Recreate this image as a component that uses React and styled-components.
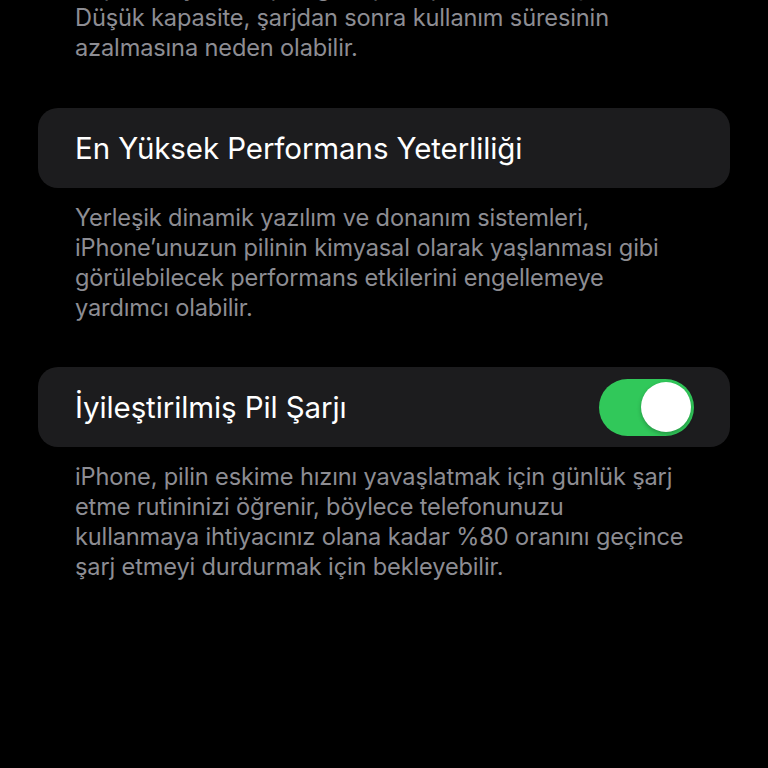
import React, { useState } from "react";
import styled, { createGlobalStyle } from "styled-components";

const Global = createGlobalStyle`
  html, body { margin: 0; padding: 0; background: #000; }
  body { font-family: "Inter", "Roboto", "Noto Sans", sans-serif; -webkit-font-smoothing: antialiased; }
`;

const Page = styled.div`
  width: 768px;
  height: 768px;
  overflow: hidden;
  background: #000;
  padding: 0 38px;
  box-sizing: border-box;
`;

const Footer = styled.p`
  margin: ${(p) => p.$top || 0}px 0 0 0;
  padding: 0 0 0 37px;
  color: #8d8d93;
  font-size: 23.6px;
  line-height: 30px;
  letter-spacing: -0.15px;
  white-space: nowrap;
`;

const Card = styled.div`
  margin-top: ${(p) => p.$top || 0}px;
  height: 80px;
  background: #1c1c1e;
  border-radius: 20px;
  display: flex;
  align-items: center;
  justify-content: space-between;
  padding: 0 37px;
  box-sizing: border-box;
`;

const Title = styled.span`
  color: #fff;
  font-size: 29.5px;
  letter-spacing: -0.1px;
`;

const Track = styled.button`
  width: 95px;
  height: 57px;
  border-radius: 29px;
  border: none;
  padding: 3.5px;
  margin-right: -1px;
  background: ${(p) => (p.$on ? "#31c85a" : "#39393d")};
  display: flex;
  justify-content: ${(p) => (p.$on ? "flex-end" : "flex-start")};
  align-items: center;
  box-sizing: border-box;
  cursor: pointer;
`;

const Knob = styled.span`
  width: 50px;
  height: 50px;
  border-radius: 50%;
  background: #fff;
  box-shadow: 0 2px 4px rgba(0, 0, 0, 0.25);
`;

export default function App() {
  const [on, setOn] = useState(true);
  return (
    <>
      <Global />
      <Page>
        <Footer $top={-27}>
          Kapasite, yeni bir pile göre pil kapasitesinin ölçüsüdür.
          <br />
          Düşük kapasite, şarjdan sonra kullanım süresinin
          <br />
          azalmasına neden olabilir.
        </Footer>
        <Card $top={45}>
          <Title>En Yüksek Performans Yeterliliği</Title>
        </Card>
        <Footer $top={15}>
          Yerleşik dinamik yazılım ve donanım sistemleri,
          <br />
          iPhone’unuzun pilinin kimyasal olarak yaşlanması gibi
          <br />
          görülebilecek performans etkilerini engellemeye
          <br />
          yardımcı olabilir.
        </Footer>
        <Card $top={44}>
          <Title>İyileştirilmiş Pil Şarjı</Title>
          <Track $on={on} onClick={() => setOn(!on)} aria-label="İyileştirilmiş Pil Şarjı">
            <Knob />
          </Track>
        </Card>
        <Footer $top={15}>
          iPhone, pilin eskime hızını yavaşlatmak için günlük şarj
          <br />
          etme rutininizi öğrenir, böylece telefonunuzu
          <br />
          kullanmaya ihtiyacınız olana kadar %80 oranını geçince
          <br />
          şarj etmeyi durdurmak için bekleyebilir.
        </Footer>
      </Page>
    </>
  );
}
